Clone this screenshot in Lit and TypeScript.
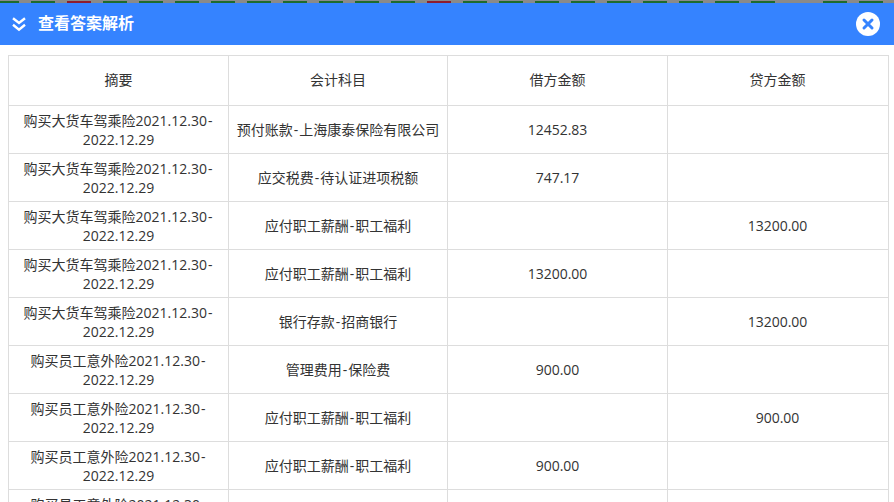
import { LitElement, html, css } from "lit";
import { customElement } from "lit/decorators.js";

const A = "购买大货车驾乘险2021.12.30-2022.12.29";
const B = "购买员工意外险2021.12.30-2022.12.29";
const rows: [string, string, string, string][] = [
  [A, "预付账款-上海康泰保险有限公司", "12452.83", ""],
  [A, "应交税费-待认证进项税额", "747.17", ""],
  [A, "应付职工薪酬-职工福利", "", "13200.00"],
  [A, "应付职工薪酬-职工福利", "13200.00", ""],
  [A, "银行存款-招商银行", "", "13200.00"],
  [B, "管理费用-保险费", "900.00", ""],
  [B, "应付职工薪酬-职工福利", "", "900.00"],
  [B, "应付职工薪酬-职工福利", "900.00", ""],
  [B, "", "", ""],
];
const dashes = Array.from({ length: 25 }, (_, i) => i);

@customElement("app-root")
export class AppRoot extends LitElement {
  static styles = css`
    :host {
      display: block;
      width: 894px;
      height: 502px;
      overflow: hidden;
      background: #fff;
      font-family: "Open Sans", "Noto Sans CJK SC", sans-serif;
      color: #333;
    }
    .strip {
      height: 3px;
      background: #8a8a8a;
      box-sizing: border-box;
      padding-top: 1px;
      display: flex;
      gap: 12px;
      margin-left: -5px;
      overflow: hidden;
    }
    .dash {
      flex: 0 0 24px;
      height: 2px;
      background: #1f6b2c;
    }
    .dash.red { background: #8e1c2c; }
    .dash.none { background: transparent; }
    .bar {
      height: 42px;
      background: #3583ff;
      display: flex;
      align-items: center;
      padding: 0 14px 0 12px;
      color: #fff;
    }
    .chev { width: 14px; height: 16px; margin-right: 12px; flex: none; }
    .title { font-size: 16px; font-weight: 700; flex: 1; line-height: 20px; padding-bottom: 2px; }
    .close { width: 24px; height: 24px; flex: none; }
    .body { padding: 10px 6px 0 8px; }
    table {
      border-collapse: collapse;
      table-layout: fixed;
      width: 880px;
      font-size: 14px;
      line-height: 19.5px;
      text-align: center;
    }
    .c1, .c3 { width: 220px; }
    .c2 { width: 219px; }
    .c4 { width: 221px; }
    th, td {
      border: 1px solid #ddd;
      padding: 0 5px;
      font-weight: 400;
      height: 47px;
      box-sizing: content-box;
    }
    td { padding-top: 1px; height: 46px; }
    th { padding-bottom: 2px; height: 47px; }
    th:last-child, td:last-child { padding-right: 6px; }
    .hy { margin: 0 1px; }
  `;

  private cell(text: string) {
    const i = text.indexOf("-");
    if (i < 0) return text;
    return html`${text.slice(0, i)}<span class="hy">-</span>${text.slice(i + 1)}`;
  }

  render() {
    return html`
      <div class="strip">
        ${dashes.map(
          (i) => html`<div class="dash ${i === 2 || i === 12 ? "red" : ""} ${i === 22 ? "none" : ""}"></div>`
        )}
      </div>
      <div class="bar">
        <svg class="chev" viewBox="0 0 14 16" fill="none" stroke="#fff" stroke-width="2.4">
          <path d="M1 2.2 L7 7 L13 2.2" />
          <path d="M1 8.8 L7 13.6 L13 8.8" />
        </svg>
        <div class="title">查看答案解析</div>
        <svg class="close" viewBox="0 0 24 24">
          <circle cx="12" cy="12" r="12" fill="#fff" />
          <path d="M8 8 L16 16 M16 8 L8 16" stroke="#3583ff" stroke-width="3" stroke-linecap="round" />
        </svg>
      </div>
      <div class="body">
        <table>
          <colgroup>
            <col class="c1" /><col class="c2" /><col class="c3" /><col class="c4" />
          </colgroup>
          <thead>
            <tr><th>摘要</th><th>会计科目</th><th>借方金额</th><th>贷方金额</th></tr>
          </thead>
          <tbody>
            ${rows.map((r) => html`<tr>${r.map((c) => html`<td>${this.cell(c)}</td>`)}</tr>`)}
          </tbody>
        </table>
      </div>
    `;
  }
}
